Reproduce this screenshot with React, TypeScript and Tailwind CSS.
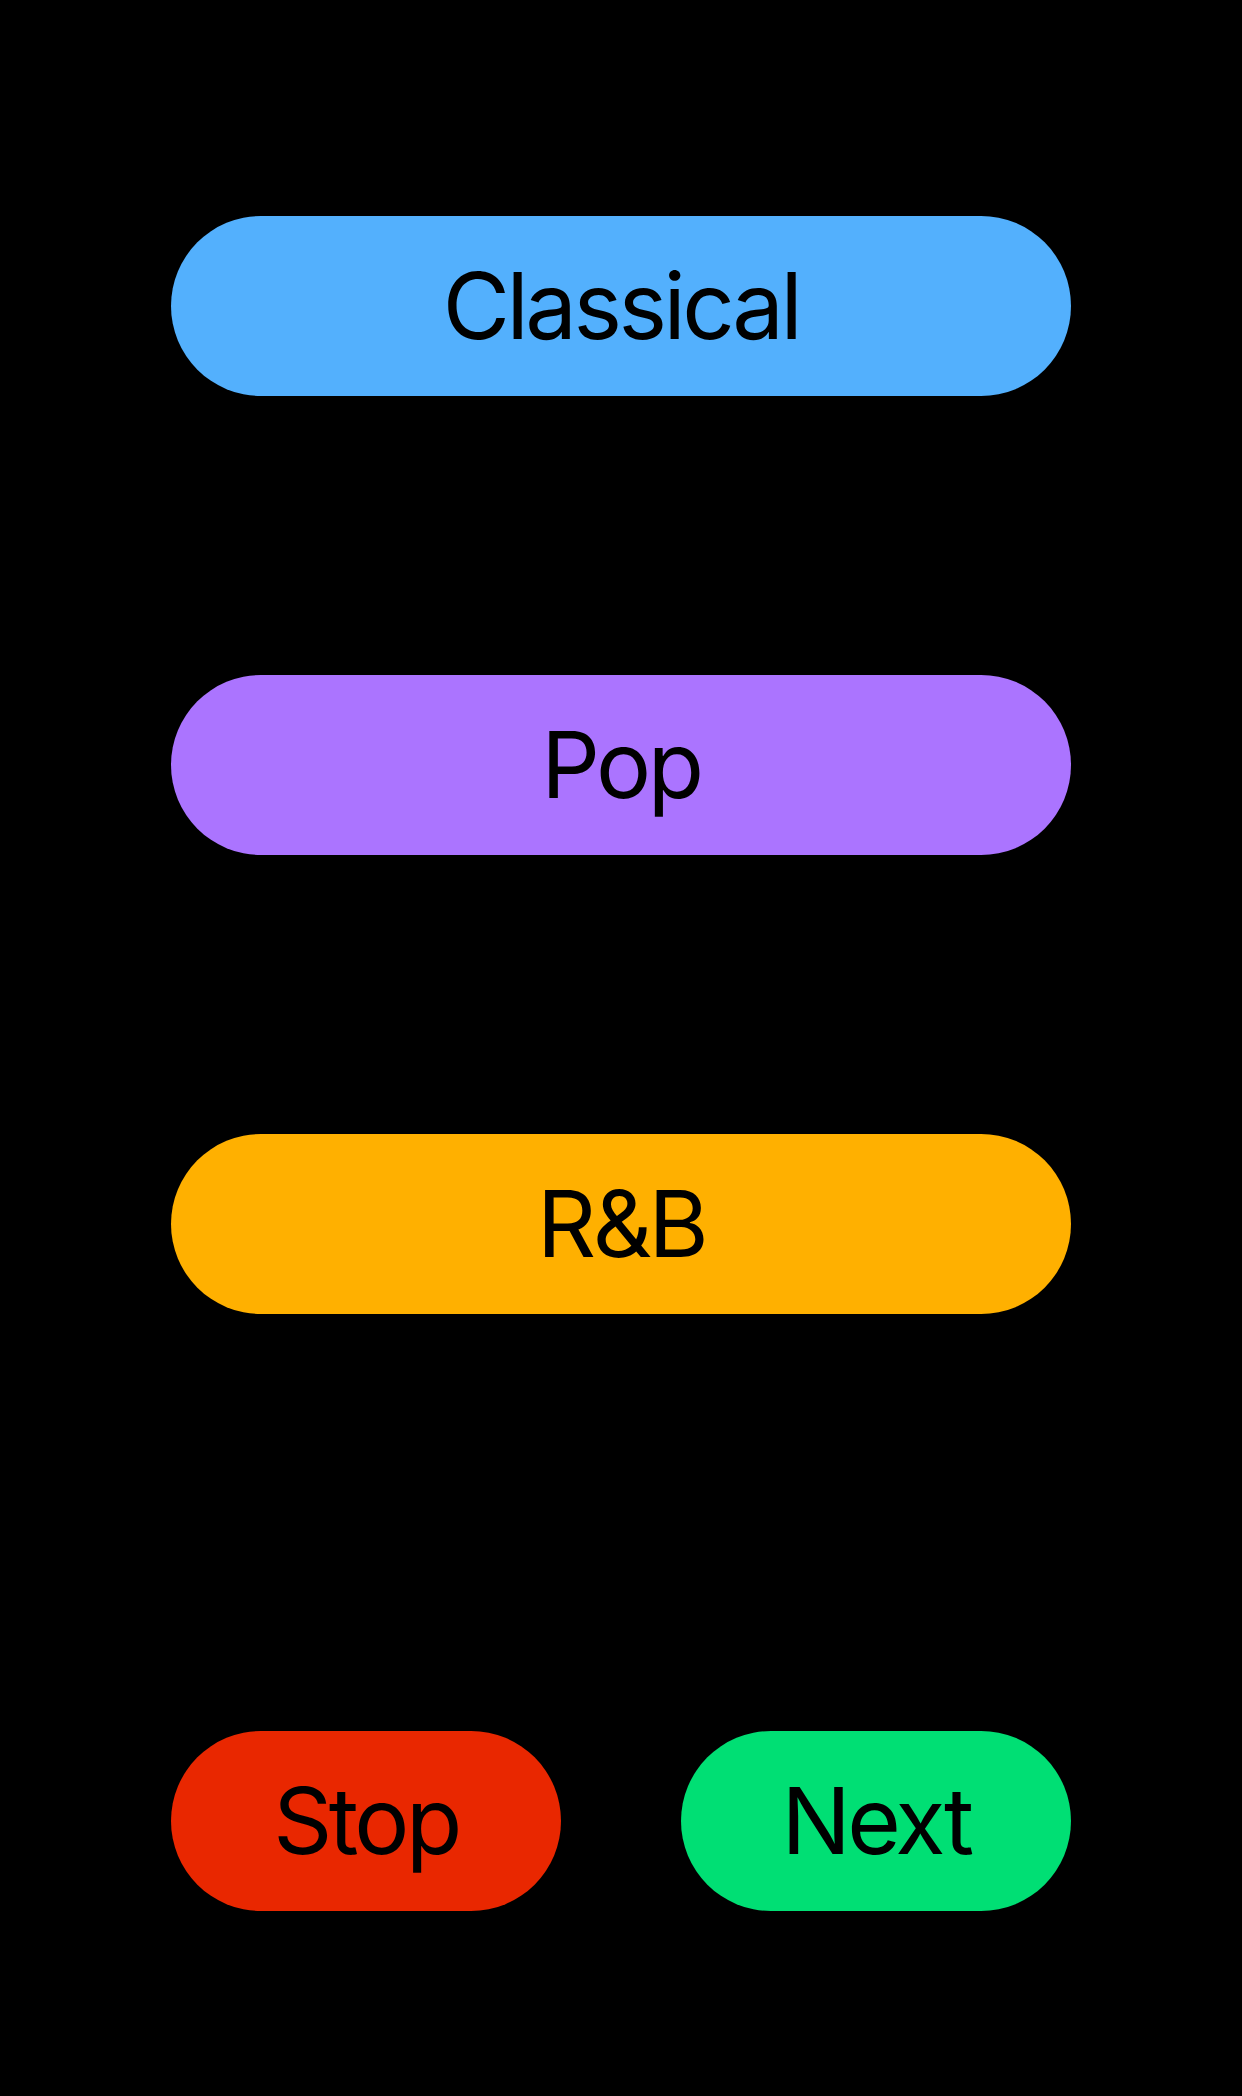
import React from "react";

function Pill({ label, color, width }: { label: string; color: string; width: string }) {
  return (
    <button
      className={`${width} h-[180px] rounded-full flex items-center justify-center text-black text-[92px] leading-none ${color}`}
      style={{ fontFamily: "Inter, 'Liberation Sans', sans-serif" }}
    >
      <span className="tracking-[-3.5px]">{label}</span>
    </button>
  );
}

export default function App() {
  return (
    <div className="w-[1242px] h-[2096px] bg-black flex flex-col items-center pt-[216px]">
      <div className="flex flex-col gap-[279px]">
        <Pill label="Classical" color="bg-[#53b0fd]" width="w-[900px]" />
        <Pill label="Pop" color="bg-[#ab74ff]" width="w-[900px]" />
        <Pill label="R&B" color="bg-[#ffb000]" width="w-[900px]" />
      </div>
      <div className="mt-[417px] flex gap-[120px]">
        <Pill label="Stop" color="bg-[#e92700]" width="w-[390px]" />
        <Pill label="Next" color="bg-[#00df74]" width="w-[390px]" />
      </div>
    </div>
  );
}
